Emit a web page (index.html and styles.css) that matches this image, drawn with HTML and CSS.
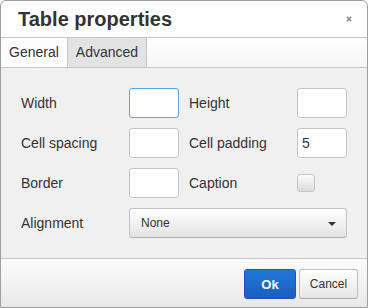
FILE: index.html
```html
<!DOCTYPE html>
<html>
<head>
<meta charset="utf-8">
<link rel="stylesheet" href="styles.css">
</head>
<body>
<div class="dialog">
  <div class="head">
    <span class="title">Table properties</span>
    <span class="close"><svg width="6" height="6" viewBox="0 0 6 6"><path d="M0.8 0.8L5.2 5.2M5.2 0.8L0.8 5.2" stroke="#8c8c8c" stroke-width="1.6"/></svg></span>
  </div>
  <div class="tabs">
    <div class="tab active">General</div>
    <div class="tab">Advanced</div>
  </div>
  <div class="body">
    <div class="grid">
      <label class="lbl">Width</label>
      <div class="cell"><input class="txt focus" type="text"></div>
      <label class="lbl">Height</label>
      <div class="cell"><input class="txt" type="text"></div>

      <label class="lbl">Cell spacing</label>
      <div class="cell"><input class="txt" type="text"></div>
      <label class="lbl">Cell padding</label>
      <div class="cell"><input class="txt" type="text" value="5"></div>

      <label class="lbl">Border</label>
      <div class="cell"><input class="txt" type="text"></div>
      <label class="lbl">Caption</label>
      <div class="cell"><span class="check"></span></div>

      <label class="lbl">Alignment</label>
      <div class="cell wide"><div class="select"><span>None</span><i class="caret"></i></div></div>
    </div>
  </div>
  <div class="foot">
    <button class="btn primary">Ok</button>
    <button class="btn">Cancel</button>
  </div>
</div>
</body>
</html>
```
FILE: styles.css
```css
html, body {
  margin: 0;
  padding: 0;
  background: #fff;
}
body {
  font-family: "Liberation Sans", Arial, sans-serif;
  font-size: 14px;
  color: #333;
}
.dialog {
  width: 368px;
  height: 308px;
  box-sizing: border-box;
  border: 1px solid #9e9e9e;
  border-radius: 6px 6px 0 0;
  background: #fff;
  display: flex;
  flex-direction: column;
  overflow: hidden;
}
.head {
  height: 36px;
  flex: none;
  display: flex;
  align-items: center;
  border-bottom: 1px solid #c5c5c5;
  padding: 0 15px 0 17px;
}
.title {
  font-size: 20px;
  font-weight: bold;
  line-height: 36px;
  color: #333;
  flex: 1;
}
.close {
  display: flex;
  width: 6px;
  height: 6px;
  margin-top: -1px;
}
.tabs {
  height: 29px;
  flex: none;
  display: flex;
  border-bottom: 1px solid #c5c5c5;
  background: linear-gradient(#fdfdfd, #f6f6f6);
}
.tab {
  padding: 0 8px;
  line-height: 29px;
  background: #e3e3e3;
  border-right: 1px solid #c5c5c5;
  color: #333;
}
.tab.active {
  background: #fdfdfd;
}
.body {
  flex: 1;
  background: #f0f0f0;
  padding: 20px 20px 0 20px;
  border-bottom: 1px solid #c5c5c5;
}
.grid {
  display: grid;
  grid-template-columns: 108px 60px 108px 50px;
  grid-auto-rows: 30px;
  row-gap: 10px;
}
.lbl {
  display: flex;
  align-items: center;
  color: #333;
  font-size: 14px;
}
.cell {
  display: flex;
  align-items: center;
}
.cell.wide {
  grid-column: 2 / 5;
}
.txt {
  width: 50px;
  height: 30px;
  box-sizing: border-box;
  border: 1px solid #c5c5c5;
  border-radius: 3px;
  background: #fff;
  padding: 0 4px;
  font-family: "Liberation Sans", Arial, sans-serif;
  font-size: 14px;
  color: #333;
  outline: none;
  margin: 0;
}
.txt.focus {
  border-color: #59a5e5;
}
.check {
  display: block;
  width: 18px;
  height: 18px;
  box-sizing: border-box;
  border: 1px solid #c5c5c5;
  border-radius: 3px;
  background: linear-gradient(#fcfcfc, #dcdcdc);
}
.select {
  width: 218px;
  height: 30px;
  box-sizing: border-box;
  border: 1px solid #c4c4c4;
  border-bottom-color: #b1b1b1;
  border-radius: 3px;
  background: linear-gradient(#ffffff, #e3e3e3);
  display: flex;
  align-items: center;
  padding: 0 10px 0 11px;
  font-size: 12px;
  color: #333;
}
.select span {
  flex: 1;
}
.caret {
  width: 0;
  height: 0;
  border-left: 4px solid transparent;
  border-right: 4px solid transparent;
  border-top: 4px solid #333;
  margin-top: 1px;
}
.foot {
  height: 48px;
  flex: none;
  display: flex;
  justify-content: flex-end;
  align-items: flex-start;
  padding: 10px 9px 0 0;
  box-sizing: border-box;
  background: linear-gradient(#fbfbfb, #e9e9e9);
}
.btn {
  height: 30px;
  box-sizing: border-box;
  margin: 0 0 0 3px;
  border: 1px solid #c0c0c0;
  border-bottom-color: #aaa;
  border-radius: 3px;
  background: linear-gradient(#ffffff, #e5e5e5);
  font-family: "Liberation Sans", Arial, sans-serif;
  font-size: 12px;
  color: #333;
  padding: 0;
  width: 59px;
}
.btn.primary {
  width: 52px;
  background: linear-gradient(#2279d8, #1a5cc2);
  border-color: #1a58b8;
  color: #fff;
  font-weight: bold;
  font-size: 13px;
}
```
